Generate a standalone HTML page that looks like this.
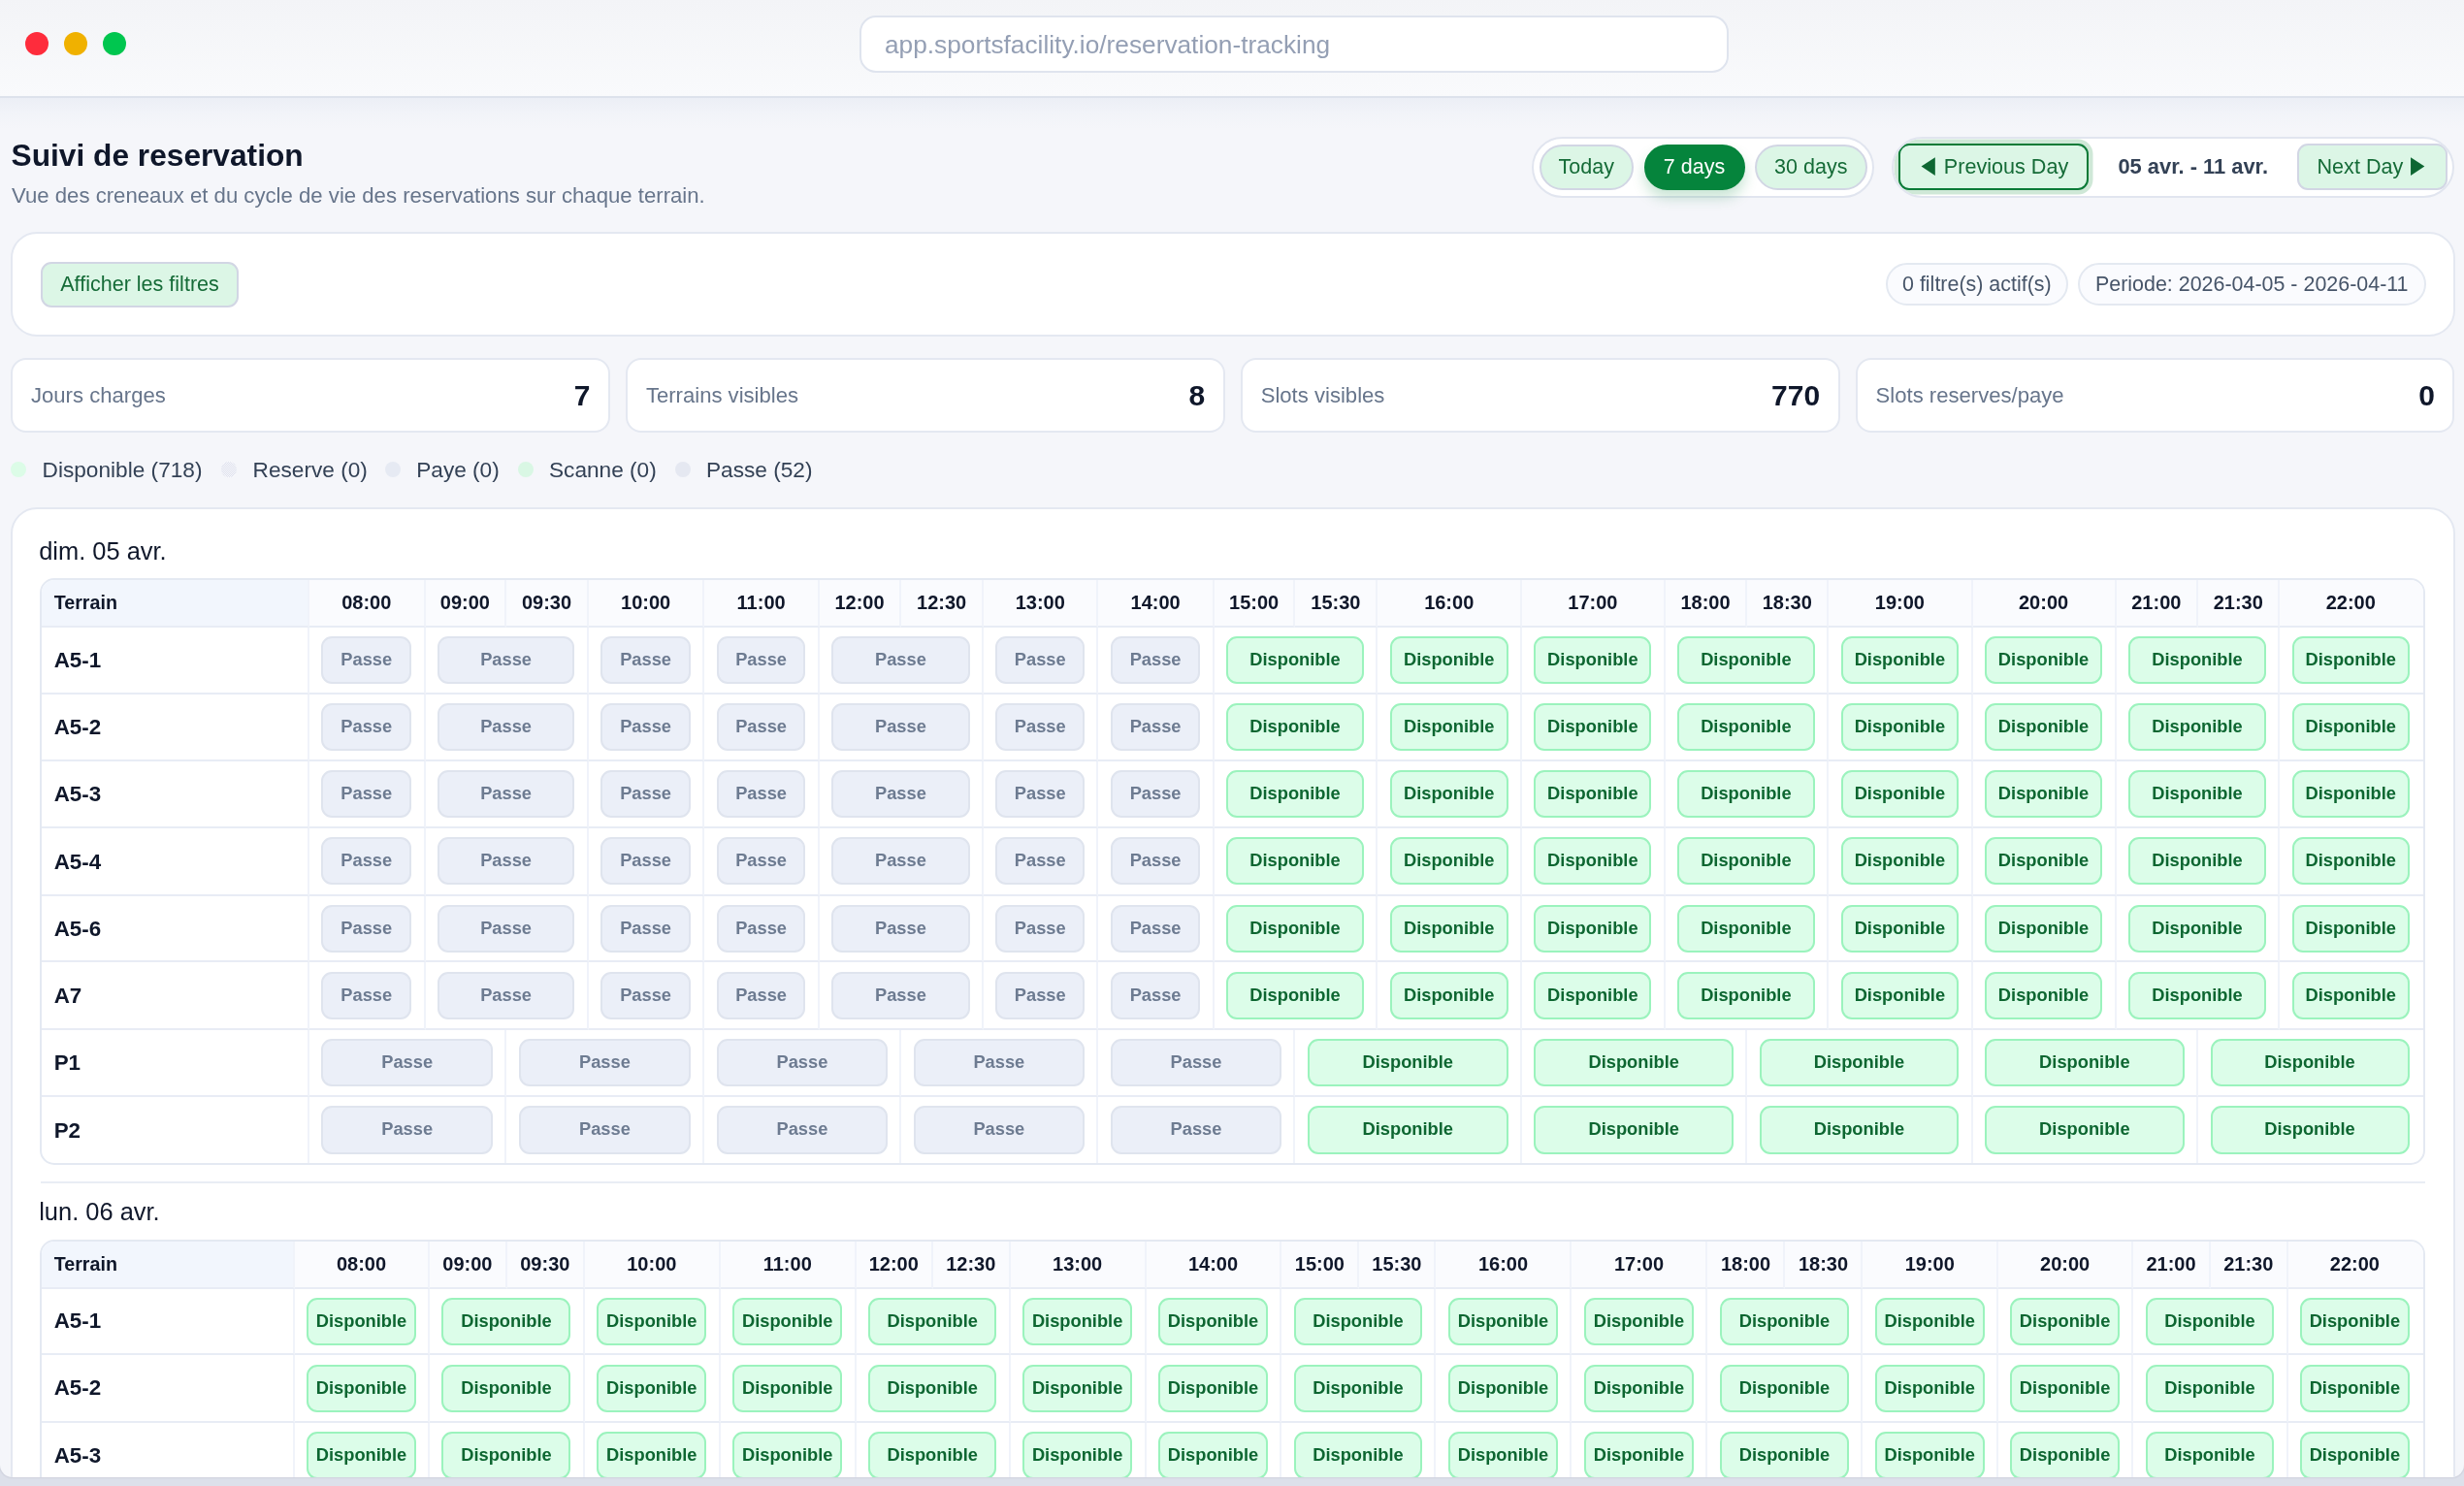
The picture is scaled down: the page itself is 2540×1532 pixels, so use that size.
<!DOCTYPE html><html lang="fr"><head><meta charset="utf-8"><title>Suivi de reservation</title><style>
*{box-sizing:border-box;margin:0;padding:0}
button{font-family:inherit;-webkit-appearance:none;appearance:none;display:block;cursor:pointer;letter-spacing:0}
html,body{width:2540px;height:1532px;overflow:hidden}
body{background:#dde0ea;font-family:"Liberation Sans", Arial, Helvetica, sans-serif;color:#0f172a;position:relative}
.win{position:absolute;left:0;top:0;width:2540px;height:1523px;background:#f5f6fa;border-radius:0 0 13px 13px;overflow:hidden;will-change:transform;box-shadow:0 0.5px 1.5px 0.5px #cfd2dd}
.abs{position:absolute}
.tbar{position:absolute;left:0;top:0;width:2540px;height:100.5px;background:linear-gradient(#f3f4f7,#f9fafc);border-bottom:2px solid #dde2ec}
.tshadow{position:absolute;left:0;top:100.5px;width:2540px;height:32px;background:linear-gradient(rgba(226,231,241,.5),rgba(236,239,246,.35) 50%,rgba(245,246,250,0))}
.dot{position:absolute;top:33px;width:24px;height:24px;border-radius:50%}
.url{position:absolute;left:886px;top:15.5px;width:896px;height:59px;border:2px solid #dfe4ee;border-radius:17px;background:#fff;color:#949fb4;font-size:26.25px;line-height:56.4px;padding-left:24px;white-space:nowrap}
h1{position:absolute;left:11.5px;top:140px;font-size:31.7px;line-height:40px;font-weight:700;color:#0f172a;white-space:nowrap;letter-spacing:0}
.sub{position:absolute;left:12px;top:186.7px;font-size:22.16px;line-height:30px;color:#67758b;white-space:nowrap}
.seg{position:absolute;top:140.6px;height:63px;border:2px solid #e1e5ef;border-radius:31.5px;background:#fff;display:flex;align-items:center;padding:0 5.5px}
.seg.clip{overflow:hidden}
.pill{height:47px;border:2px solid #d2d6e4;border-radius:24px;background:#dcf6e6;color:#156b37;font-size:21.5px;line-height:43px;text-align:center;white-space:nowrap}
.pill.on{background:#05843c;border-color:#05843c;color:#fff;box-shadow:0 8px 14px rgba(5,132,60,.22)}
.nav{height:48px;border:2px solid #d2d6e4;border-radius:11px;background:#dcf6e6;color:#156b37;font-size:21.6px;line-height:42px;padding-bottom:0.4px;white-space:nowrap;display:flex;align-items:center;justify-content:center}
.nav.focus{border-color:#0a7a37;box-shadow:0 0 0 4.5px #cfe8d7}
.tri{display:inline-block;font-family:"DejaVu Sans",sans-serif;font-size:24.6px;line-height:24px;height:24px;width:18.9px;color:#0e6632;transform:scaleX(.76);position:relative;top:-1.9px}
.tri.l{left:-0.6px;margin-left:-2.3px;margin-right:8.4px;transform-origin:100% 50%}
.tri.r{margin-left:7.4px;margin-right:-2.6px;transform-origin:0 50%}
.range{font-weight:700;font-size:21.9px;color:#334155;white-space:nowrap}
.card{position:absolute;background:#fff;border:2px solid #e4e8f1}
.fbtn{position:absolute;left:29px;top:28.6px;width:204px;height:47.5px;border:2px solid #d2d6e4;border-radius:11px;background:#dcf6e6;color:#156b37;font-size:21.55px;line-height:41.5px;padding-bottom:2px;text-align:center;white-space:nowrap}
.chip{position:absolute;top:29.8px;height:43.6px;border:2px solid #e4e9f1;border-radius:22px;background:#fafbfe;color:#475569;font-size:21.45px;line-height:41.6px;text-align:center;white-space:nowrap}
.stat{position:absolute;top:369px;height:77px;width:617.9px;background:#fff;border:2px solid #e4e8f1;border-radius:16px;display:flex;align-items:center;justify-content:space-between;padding:0.5px 18.5px 0 19px}
.stat .l{font-size:22.1px;color:#67758b;white-space:nowrap}
.stat .n{font-size:30px;font-weight:700;color:#0f172a}
.leg{position:absolute;top:468px;left:11.2px;height:32px;display:flex;align-items:center;font-size:22.65px;color:#334155;white-space:nowrap}
.leg i{display:inline-block;width:16px;height:16px;border-radius:50%;margin-right:16.4px;position:relative;top:-0.5px}
.leg span{margin-right:18.85px}
.day{position:absolute;left:27.2px;font-size:25.45px;line-height:34px;color:#0f172a;white-space:nowrap}
.tw{position:absolute;left:28px;width:2459px;border:2px solid #e4e9f2;border-radius:15px;overflow:hidden;background:#fff}
table{border-collapse:separate;border-spacing:0;table-layout:fixed;width:2455px}
th,td{border-right:2px solid #f0f3fa;border-bottom:2px solid #e8ecf5;padding:0;vertical-align:middle;overflow:hidden}
th:last-child,td:last-child{border-right:0;padding-right:2px}
tr:last-child td{border-bottom:0}
th{height:48.8px;background:#fafbfe;font-size:20px;font-weight:700;color:#0f172a;text-align:center;white-space:nowrap}
th.t{background:#f2f6fd;text-align:left;padding-left:12.7px;font-size:19.7px}
td{height:auto}
td.t{font-size:22.4px;font-weight:700;color:#0f172a;padding-left:12.7px;padding-top:1.4px;white-space:nowrap}
.t2 td.t{padding-top:0.2px}
.t2 tr:last-child td{border-bottom:2px solid #e8ecf5}
.b{display:block;margin:0 auto;height:49.2px;border-radius:11px;font-size:18.3px;font-weight:700;line-height:43px;text-align:center;white-space:nowrap}
.p{background:#ebeff8;border:2px solid #dfe4ee;color:#6d7b91}
.d{background:#dcfde9;border:2px solid #9bf3bd;color:#0d6631}
.hr{position:absolute;left:28.5px;width:2458.5px;height:2px;background:#e9edf4}
</style></head><body>
<div class="win">
<div class="tbar"><span class="dot" style="left:26px;background:#fe2c3c"></span><span class="dot" style="left:66px;background:#f0b100"></span><span class="dot" style="left:106px;background:#00c64f"></span><div class="url">app.sportsfacility.io/reservation-tracking</div></div>
<div class="tshadow"></div>
<h1>Suivi de reservation</h1>
<div class="sub">Vue des creneaux et du cycle de vie des reservations sur chaque terrain.</div>
<div class="seg" style="left:1579px;width:353px"><button type="button" class="pill" style="width:97.5px">Today</button><button type="button" class="pill on" style="width:104px;margin-left:10.5px">7 days</button><button type="button" class="pill" style="width:115.5px;margin-left:10.5px">30 days</button></div>
<div class="seg clip" style="left:1949.5px;width:580.5px"><button type="button" class="nav focus" style="width:197px;padding-left:0.7px"><span class="tri l">◀</span>Previous Day</button><div class="range" style="margin-left:30px">05 avr. - 11 avr.</div><button type="button" class="nav" style="width:154.5px;margin-left:30.5px;padding-right:1.5px">Next Day<span class="tri r">▶</span></button></div>
<div class="card" style="left:11px;top:239.2px;width:2519.5px;height:107.8px;border-radius:27px"><button type="button" class="fbtn">Afficher les filtres</button><div class="chip" style="left:1930.6px;width:188.5px">0 filtre(s) actif(s)</div><div class="chip" style="left:2129px;width:358.5px">Periode: 2026-04-05 - 2026-04-11</div></div>
<div class="stat" style="left:11.0px"><span class="l">Jours charges</span><span class="n">7</span></div>
<div class="stat" style="left:644.9px"><span class="l">Terrains visibles</span><span class="n">8</span></div>
<div class="stat" style="left:1278.7px"><span class="l">Slots visibles</span><span class="n">770</span></div>
<div class="stat" style="left:1912.6px"><span class="l">Slots reserves/paye</span><span class="n">0</span></div>
<div class="leg"><i style="background:#dcfce7"></i><span>Disponible (718)</span><i style="background:repeating-conic-gradient(#d9dce9 0 25%,#fcfcff 0 50%) 0 0/2px 2px;margin-left:0.9px"></i><span style="margin-right:17.95px">Reserve (0)</span><i style="background:#e6eaf3"></i><span>Paye (0)</span><i style="background:#d9f7e4"></i><span>Scanne (0)</span><i style="background:#e5e8f1"></i><span>Passe (52)</span></div>
<div class="card" style="left:11px;top:523px;width:2519.5px;height:1100px;border-radius:27px">
<div class="day" style="top:25.8px">dim. 05 avr.</div>
<div class="tw" style="top:71px">
<table><colgroup><col style="width:276.00px"><col style="width:119.50px"><col style="width:83.80px"><col style="width:84.45px"><col style="width:119.75px"><col style="width:118.25px"><col style="width:84.55px"><col style="width:84.80px"><col style="width:118.40px"><col style="width:119.25px"><col style="width:83.75px"><col style="width:84.90px"><col style="width:148.70px"><col style="width:147.60px"><col style="width:84.70px"><col style="width:83.85px"><col style="width:148.45px"><col style="width:147.95px"><col style="width:84.55px"><col style="width:84.40px"><col style="width:147.40px"></colgroup>
<thead><tr><th class="t">Terrain</th><th>08:00</th><th>09:00</th><th>09:30</th><th>10:00</th><th>11:00</th><th>12:00</th><th>12:30</th><th>13:00</th><th>14:00</th><th>15:00</th><th>15:30</th><th>16:00</th><th>17:00</th><th>18:00</th><th>18:30</th><th>19:00</th><th>20:00</th><th>21:00</th><th>21:30</th><th>22:00</th></tr></thead><tbody>
<tr style="height:69.6px"><td class="t">A5-1</td><td><span class="b p" style="width:92.70px">Passe</span></td><td colspan="2"><span class="b p" style="width:141.45px">Passe</span></td><td><span class="b p" style="width:92.95px">Passe</span></td><td><span class="b p" style="width:91.45px">Passe</span></td><td colspan="2"><span class="b p" style="width:142.55px">Passe</span></td><td><span class="b p" style="width:91.60px">Passe</span></td><td><span class="b p" style="width:92.45px">Passe</span></td><td colspan="2"><span class="b d" style="width:141.85px">Disponible</span></td><td><span class="b d" style="width:121.90px">Disponible</span></td><td><span class="b d" style="width:120.80px">Disponible</span></td><td colspan="2"><span class="b d" style="width:141.75px">Disponible</span></td><td><span class="b d" style="width:121.65px">Disponible</span></td><td><span class="b d" style="width:121.15px">Disponible</span></td><td colspan="2"><span class="b d" style="width:142.15px">Disponible</span></td><td><span class="b d" style="width:120.60px">Disponible</span></td></tr>
<tr style="height:68.8px"><td class="t">A5-2</td><td><span class="b p" style="width:92.70px">Passe</span></td><td colspan="2"><span class="b p" style="width:141.45px">Passe</span></td><td><span class="b p" style="width:92.95px">Passe</span></td><td><span class="b p" style="width:91.45px">Passe</span></td><td colspan="2"><span class="b p" style="width:142.55px">Passe</span></td><td><span class="b p" style="width:91.60px">Passe</span></td><td><span class="b p" style="width:92.45px">Passe</span></td><td colspan="2"><span class="b d" style="width:141.85px">Disponible</span></td><td><span class="b d" style="width:121.90px">Disponible</span></td><td><span class="b d" style="width:120.80px">Disponible</span></td><td colspan="2"><span class="b d" style="width:141.75px">Disponible</span></td><td><span class="b d" style="width:121.65px">Disponible</span></td><td><span class="b d" style="width:121.15px">Disponible</span></td><td colspan="2"><span class="b d" style="width:142.15px">Disponible</span></td><td><span class="b d" style="width:120.60px">Disponible</span></td></tr>
<tr style="height:68.7px"><td class="t">A5-3</td><td><span class="b p" style="width:92.70px">Passe</span></td><td colspan="2"><span class="b p" style="width:141.45px">Passe</span></td><td><span class="b p" style="width:92.95px">Passe</span></td><td><span class="b p" style="width:91.45px">Passe</span></td><td colspan="2"><span class="b p" style="width:142.55px">Passe</span></td><td><span class="b p" style="width:91.60px">Passe</span></td><td><span class="b p" style="width:92.45px">Passe</span></td><td colspan="2"><span class="b d" style="width:141.85px">Disponible</span></td><td><span class="b d" style="width:121.90px">Disponible</span></td><td><span class="b d" style="width:120.80px">Disponible</span></td><td colspan="2"><span class="b d" style="width:141.75px">Disponible</span></td><td><span class="b d" style="width:121.65px">Disponible</span></td><td><span class="b d" style="width:121.15px">Disponible</span></td><td colspan="2"><span class="b d" style="width:142.15px">Disponible</span></td><td><span class="b d" style="width:120.60px">Disponible</span></td></tr>
<tr style="height:69.9px"><td class="t">A5-4</td><td><span class="b p" style="width:92.70px">Passe</span></td><td colspan="2"><span class="b p" style="width:141.45px">Passe</span></td><td><span class="b p" style="width:92.95px">Passe</span></td><td><span class="b p" style="width:91.45px">Passe</span></td><td colspan="2"><span class="b p" style="width:142.55px">Passe</span></td><td><span class="b p" style="width:91.60px">Passe</span></td><td><span class="b p" style="width:92.45px">Passe</span></td><td colspan="2"><span class="b d" style="width:141.85px">Disponible</span></td><td><span class="b d" style="width:121.90px">Disponible</span></td><td><span class="b d" style="width:120.80px">Disponible</span></td><td colspan="2"><span class="b d" style="width:141.75px">Disponible</span></td><td><span class="b d" style="width:121.65px">Disponible</span></td><td><span class="b d" style="width:121.15px">Disponible</span></td><td colspan="2"><span class="b d" style="width:142.15px">Disponible</span></td><td><span class="b d" style="width:120.60px">Disponible</span></td></tr>
<tr style="height:68.7px"><td class="t">A5-6</td><td><span class="b p" style="width:92.70px">Passe</span></td><td colspan="2"><span class="b p" style="width:141.45px">Passe</span></td><td><span class="b p" style="width:92.95px">Passe</span></td><td><span class="b p" style="width:91.45px">Passe</span></td><td colspan="2"><span class="b p" style="width:142.55px">Passe</span></td><td><span class="b p" style="width:91.60px">Passe</span></td><td><span class="b p" style="width:92.45px">Passe</span></td><td colspan="2"><span class="b d" style="width:141.85px">Disponible</span></td><td><span class="b d" style="width:121.90px">Disponible</span></td><td><span class="b d" style="width:120.80px">Disponible</span></td><td colspan="2"><span class="b d" style="width:141.75px">Disponible</span></td><td><span class="b d" style="width:121.65px">Disponible</span></td><td><span class="b d" style="width:121.15px">Disponible</span></td><td colspan="2"><span class="b d" style="width:142.15px">Disponible</span></td><td><span class="b d" style="width:120.60px">Disponible</span></td></tr>
<tr style="height:69.3px"><td class="t">A7</td><td><span class="b p" style="width:92.70px">Passe</span></td><td colspan="2"><span class="b p" style="width:141.45px">Passe</span></td><td><span class="b p" style="width:92.95px">Passe</span></td><td><span class="b p" style="width:91.45px">Passe</span></td><td colspan="2"><span class="b p" style="width:142.55px">Passe</span></td><td><span class="b p" style="width:91.60px">Passe</span></td><td><span class="b p" style="width:92.45px">Passe</span></td><td colspan="2"><span class="b d" style="width:141.85px">Disponible</span></td><td><span class="b d" style="width:121.90px">Disponible</span></td><td><span class="b d" style="width:120.80px">Disponible</span></td><td colspan="2"><span class="b d" style="width:141.75px">Disponible</span></td><td><span class="b d" style="width:121.65px">Disponible</span></td><td><span class="b d" style="width:121.15px">Disponible</span></td><td colspan="2"><span class="b d" style="width:142.15px">Disponible</span></td><td><span class="b d" style="width:120.60px">Disponible</span></td></tr>
<tr style="height:69.1px"><td class="t">P1</td><td colspan="2"><span class="b p" style="width:176.50px">Passe</span></td><td colspan="2"><span class="b p" style="width:177.40px">Passe</span></td><td colspan="2"><span class="b p" style="width:176.00px">Passe</span></td><td colspan="2"><span class="b p" style="width:176.40px">Passe</span></td><td colspan="2"><span class="b p" style="width:176.20px">Passe</span></td><td colspan="2"><span class="b d" style="width:206.80px">Disponible</span></td><td colspan="2"><span class="b d" style="width:205.50px">Disponible</span></td><td colspan="2"><span class="b d" style="width:205.50px">Disponible</span></td><td colspan="2"><span class="b d" style="width:205.70px">Disponible</span></td><td colspan="2"><span class="b d" style="width:205.00px">Disponible</span></td></tr>
<tr style="height:68.4px"><td class="t">P2</td><td colspan="2"><span class="b p" style="width:176.50px">Passe</span></td><td colspan="2"><span class="b p" style="width:177.40px">Passe</span></td><td colspan="2"><span class="b p" style="width:176.00px">Passe</span></td><td colspan="2"><span class="b p" style="width:176.40px">Passe</span></td><td colspan="2"><span class="b p" style="width:176.20px">Passe</span></td><td colspan="2"><span class="b d" style="width:206.80px">Disponible</span></td><td colspan="2"><span class="b d" style="width:205.50px">Disponible</span></td><td colspan="2"><span class="b d" style="width:205.50px">Disponible</span></td><td colspan="2"><span class="b d" style="width:205.70px">Disponible</span></td><td colspan="2"><span class="b d" style="width:205.00px">Disponible</span></td></tr>
</tbody></table></div>
<div class="hr" style="top:692.5px"></div>
<div class="day" style="top:707.3px">lun. 06 avr.</div>
<div class="tw t2" style="top:753px">
<table><colgroup><col style="width:261.00px"><col style="width:139.00px"><col style="width:79.75px"><col style="width:80.15px"><col style="width:139.85px"><col style="width:140.00px"><col style="width:79.00px"><col style="width:80.00px"><col style="width:139.85px"><col style="width:139.90px"><col style="width:79.75px"><col style="width:79.25px"><col style="width:140.00px"><col style="width:140.00px"><col style="width:80.00px"><col style="width:80.00px"><col style="width:139.50px"><col style="width:139.25px"><col style="width:79.50px"><col style="width:80.00px"><col style="width:139.25px"></colgroup>
<thead><tr><th class="t">Terrain</th><th>08:00</th><th>09:00</th><th>09:30</th><th>10:00</th><th>11:00</th><th>12:00</th><th>12:30</th><th>13:00</th><th>14:00</th><th>15:00</th><th>15:30</th><th>16:00</th><th>17:00</th><th>18:00</th><th>18:30</th><th>19:00</th><th>20:00</th><th>21:00</th><th>21:30</th><th>22:00</th></tr></thead><tbody>
<tr style="height:68.7px"><td class="t">A5-1</td><td><span class="b d" style="width:112.20px">Disponible</span></td><td colspan="2"><span class="b d" style="width:133.10px">Disponible</span></td><td><span class="b d" style="width:113.05px">Disponible</span></td><td><span class="b d" style="width:113.20px">Disponible</span></td><td colspan="2"><span class="b d" style="width:132.20px">Disponible</span></td><td><span class="b d" style="width:113.05px">Disponible</span></td><td><span class="b d" style="width:113.10px">Disponible</span></td><td colspan="2"><span class="b d" style="width:132.20px">Disponible</span></td><td><span class="b d" style="width:113.20px">Disponible</span></td><td><span class="b d" style="width:113.20px">Disponible</span></td><td colspan="2"><span class="b d" style="width:133.20px">Disponible</span></td><td><span class="b d" style="width:112.70px">Disponible</span></td><td><span class="b d" style="width:112.45px">Disponible</span></td><td colspan="2"><span class="b d" style="width:132.70px">Disponible</span></td><td><span class="b d" style="width:112.45px">Disponible</span></td></tr>
<tr style="height:69.6px"><td class="t">A5-2</td><td><span class="b d" style="width:112.20px">Disponible</span></td><td colspan="2"><span class="b d" style="width:133.10px">Disponible</span></td><td><span class="b d" style="width:113.05px">Disponible</span></td><td><span class="b d" style="width:113.20px">Disponible</span></td><td colspan="2"><span class="b d" style="width:132.20px">Disponible</span></td><td><span class="b d" style="width:113.05px">Disponible</span></td><td><span class="b d" style="width:113.10px">Disponible</span></td><td colspan="2"><span class="b d" style="width:132.20px">Disponible</span></td><td><span class="b d" style="width:113.20px">Disponible</span></td><td><span class="b d" style="width:113.20px">Disponible</span></td><td colspan="2"><span class="b d" style="width:133.20px">Disponible</span></td><td><span class="b d" style="width:112.70px">Disponible</span></td><td><span class="b d" style="width:112.45px">Disponible</span></td><td colspan="2"><span class="b d" style="width:132.70px">Disponible</span></td><td><span class="b d" style="width:112.45px">Disponible</span></td></tr>
<tr style="height:69px"><td class="t">A5-3</td><td><span class="b d" style="width:112.20px">Disponible</span></td><td colspan="2"><span class="b d" style="width:133.10px">Disponible</span></td><td><span class="b d" style="width:113.05px">Disponible</span></td><td><span class="b d" style="width:113.20px">Disponible</span></td><td colspan="2"><span class="b d" style="width:132.20px">Disponible</span></td><td><span class="b d" style="width:113.05px">Disponible</span></td><td><span class="b d" style="width:113.10px">Disponible</span></td><td colspan="2"><span class="b d" style="width:132.20px">Disponible</span></td><td><span class="b d" style="width:113.20px">Disponible</span></td><td><span class="b d" style="width:113.20px">Disponible</span></td><td colspan="2"><span class="b d" style="width:133.20px">Disponible</span></td><td><span class="b d" style="width:112.70px">Disponible</span></td><td><span class="b d" style="width:112.45px">Disponible</span></td><td colspan="2"><span class="b d" style="width:132.70px">Disponible</span></td><td><span class="b d" style="width:112.45px">Disponible</span></td></tr>
</tbody></table></div>
</div>
</div></body></html>
